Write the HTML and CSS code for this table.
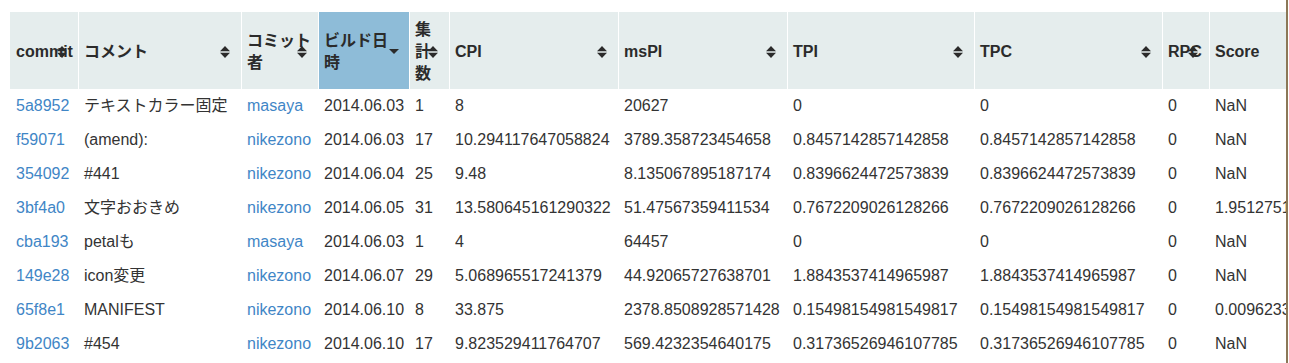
FILE: index.html
```html
<!DOCTYPE html>
<html lang="ja">
<head>
<meta charset="utf-8">
<title>commits</title>
<link rel="stylesheet" href="styles.css">
</head>
<body>
<div class="frame">
<table class="grid">
  <colgroup>
    <col class="c-commit"><col class="c-comment"><col class="c-author"><col class="c-date"><col class="c-count">
    <col class="c-cpi"><col class="c-mspi"><col class="c-tpi"><col class="c-tpc"><col class="c-rpc"><col class="c-score">
  </colgroup>
  <thead>
    <tr>
      <th class="first"><span class="label">commit</span><svg class="sort" viewBox="0 0 10 12"><path d="M0 5.2 L5 0 L10 5.2 Z M0 6.8 L10 6.8 L5 12 Z"/></svg></th>
      <th><span class="label">コメント</span><svg class="sort" viewBox="0 0 10 12"><path d="M0 5.2 L5 0 L10 5.2 Z M0 6.8 L10 6.8 L5 12 Z"/></svg></th>
      <th><span class="label">コミット<br>者</span><svg class="sort" viewBox="0 0 10 12"><path d="M0 5.2 L5 0 L10 5.2 Z M0 6.8 L10 6.8 L5 12 Z"/></svg></th>
      <th class="sorted"><span class="label">ビルド日<br>時</span><svg class="sort-down" viewBox="0 0 10 5"><path d="M0 0 L10 0 L5 5 Z"/></svg></th>
      <th><span class="label">集<br>計<br>数</span><svg class="sort" viewBox="0 0 10 12"><path d="M0 5.2 L5 0 L10 5.2 Z M0 6.8 L10 6.8 L5 12 Z"/></svg></th>
      <th><span class="label">CPI</span><svg class="sort" viewBox="0 0 10 12"><path d="M0 5.2 L5 0 L10 5.2 Z M0 6.8 L10 6.8 L5 12 Z"/></svg></th>
      <th><span class="label">msPI</span><svg class="sort" viewBox="0 0 10 12"><path d="M0 5.2 L5 0 L10 5.2 Z M0 6.8 L10 6.8 L5 12 Z"/></svg></th>
      <th><span class="label">TPI</span><svg class="sort" viewBox="0 0 10 12"><path d="M0 5.2 L5 0 L10 5.2 Z M0 6.8 L10 6.8 L5 12 Z"/></svg></th>
      <th><span class="label">TPC</span><svg class="sort" viewBox="0 0 10 12"><path d="M0 5.2 L5 0 L10 5.2 Z M0 6.8 L10 6.8 L5 12 Z"/></svg></th>
      <th><span class="label">RPC</span><svg class="sort" viewBox="0 0 10 12"><path d="M0 5.2 L5 0 L10 5.2 Z M0 6.8 L10 6.8 L5 12 Z"/></svg></th>
      <th><span class="label">Score</span></th>
    </tr>
  </thead>
  <tbody>
    <tr><td><a href="#">5a8952</a></td><td>テキストカラー固定</td><td><a href="#">masaya</a></td><td>2014.06.03</td><td>1</td><td>8</td><td>20627</td><td>0</td><td>0</td><td>0</td><td>NaN</td></tr>
    <tr><td><a href="#">f59071</a></td><td>(amend):</td><td><a href="#">nikezono</a></td><td>2014.06.03</td><td>17</td><td>10.294117647058824</td><td>3789.358723454658</td><td>0.8457142857142858</td><td>0.8457142857142858</td><td>0</td><td>NaN</td></tr>
    <tr><td><a href="#">354092</a></td><td>#441</td><td><a href="#">nikezono</a></td><td>2014.06.04</td><td>25</td><td>9.48</td><td>8.135067895187174</td><td>0.8396624472573839</td><td>0.8396624472573839</td><td>0</td><td>NaN</td></tr>
    <tr><td><a href="#">3bf4a0</a></td><td>文字おおきめ</td><td><a href="#">nikezono</a></td><td>2014.06.05</td><td>31</td><td>13.580645161290322</td><td>51.47567359411534</td><td>0.7672209026128266</td><td>0.7672209026128266</td><td>0</td><td>1.951275150602409</td></tr>
    <tr><td><a href="#">cba193</a></td><td>petalも</td><td><a href="#">masaya</a></td><td>2014.06.03</td><td>1</td><td>4</td><td>64457</td><td>0</td><td>0</td><td>0</td><td>NaN</td></tr>
    <tr><td><a href="#">149e28</a></td><td>icon変更</td><td><a href="#">nikezono</a></td><td>2014.06.07</td><td>29</td><td>5.068965517241379</td><td>44.92065727638701</td><td>1.8843537414965987</td><td>1.8843537414965987</td><td>0</td><td>NaN</td></tr>
    <tr><td><a href="#">65f8e1</a></td><td>MANIFEST</td><td><a href="#">nikezono</a></td><td>2014.06.10</td><td>8</td><td>33.875</td><td>2378.8508928571428</td><td>0.15498154981549817</td><td>0.15498154981549817</td><td>0</td><td>0.009623337132</td></tr>
    <tr><td><a href="#">9b2063</a></td><td>#454</td><td><a href="#">nikezono</a></td><td>2014.06.10</td><td>17</td><td>9.823529411764707</td><td>569.4232354640175</td><td>0.31736526946107785</td><td>0.31736526946107785</td><td>0</td><td>NaN</td></tr>
  </tbody>
</table>
</div>
</body>
</html>
```

FILE: styles.css
```css
html, body {
  margin: 0;
  padding: 0;
  background: #ffffff;
}

body {
  font-family: "Liberation Sans", "Noto Sans CJK JP", sans-serif;
  font-size: 16px;
  color: #333333;
}

.frame {
  box-sizing: border-box;
  width: 1288px;
  height: 363px;
  padding: 12px 0 0 10px;
  border-right: 2px solid #8b7857;
  overflow: hidden;
}

.grid {
  table-layout: fixed;
  border-collapse: separate;
  border-spacing: 0;
  width: 1359px;
}

.c-commit { width: 68px; }
.c-comment { width: 163px; }
.c-author { width: 77px; }
.c-date { width: 91px; }
.c-count { width: 40px; }
.c-cpi { width: 169px; }
.c-mspi { width: 169px; }
.c-tpi { width: 187px; }
.c-tpc { width: 188px; }
.c-rpc { width: 47px; }
.c-score { width: 160px; }

.grid th {
  position: relative;
  box-sizing: border-box;
  height: 77px;
  padding: 0 4px 0 5px;
  border-left: 1px solid #ffffff;
  background: #e5eded;
  color: #2b2b2b;
  font-weight: bold;
  line-height: 22px;
  text-align: left;
  vertical-align: middle;
  white-space: nowrap;
  overflow: visible;
}

.grid th.first {
  border-left: 0;
  padding-left: 6px;
}

.grid th.sorted {
  background: #8ebcd8;
}

.label {
  position: relative;
  top: 1px;
}

.sort {
  position: absolute;
  right: 11px;
  top: 50%;
  width: 10px;
  height: 12px;
  margin-top: -5px;
  fill: #2b2b2b;
}

.sort-down {
  position: absolute;
  right: 10px;
  top: 50%;
  width: 10px;
  height: 5px;
  margin-top: -2px;
  fill: #2b2b2b;
}

.grid td {
  height: 34px;
  padding: 0 6px;
  line-height: 20px;
  vertical-align: middle;
  white-space: nowrap;
  overflow: hidden;
}

.grid td a {
  color: #3f86c6;
  text-decoration: none;
}
```
